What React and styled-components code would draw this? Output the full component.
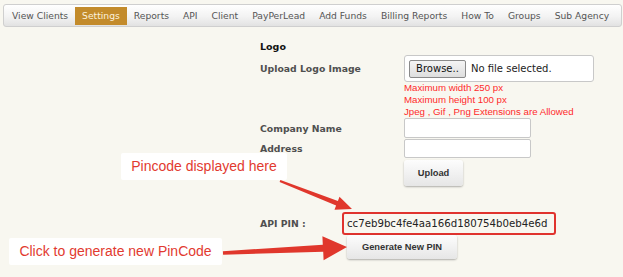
import React from 'react';
import styled, { createGlobalStyle } from 'styled-components';

const GlobalStyle = createGlobalStyle`
  html, body {
    margin: 0;
    padding: 0;
    background: #f8f7f0;
  }
  body {
    font-family: 'DejaVu Sans', Verdana, sans-serif;
  }
`;

const Page = styled.div`
  position: relative;
  width: 623px;
  height: 277px;
  padding: 4px 0 0 3px;
  box-sizing: border-box;
  overflow: hidden;
`;

const Nav = styled.ul`
  display: flex;
  align-items: center;
  list-style: none;
  margin: 0;
  padding: 0 0 0 1px;
  height: 23px;
  width: 619px;
  box-sizing: border-box;
  border: 1px solid #cfcfcf;
  border-radius: 3px;
  background: linear-gradient(#ffffff, #f3f3f3 55%, #e2e2e2);
`;

const NavItem = styled.li`
  height: 18px;
  line-height: 18px;
  padding: 0 7px;
  font-size: 9.2px;
  color: ${(p) => (p.active ? '#fbf1dc' : '#555')};
  background: ${(p) => (p.active ? '#c38b2b' : 'transparent')};
  white-space: nowrap;
`;

const Form = styled.div`
  display: flex;
  flex-direction: column;
  margin: 13px 0 0 257px;
`;

const Heading = styled.div`
  font-size: 9.5px;
  font-weight: bold;
  color: #111;
  line-height: 14px;
`;

const Row = styled.div`
  display: flex;
  align-items: center;
  margin-top: ${(p) => p.top || 0}px;
`;

const Label = styled.div`
  width: ${(p) => p.w || 144}px;
  flex: none;
  font-size: 9.3px;
  font-weight: bold;
  color: #4f4f4f;
`;

const FileBox = styled.div`
  display: flex;
  align-items: center;
  width: 190px;
  height: 27px;
  box-sizing: border-box;
  padding-left: 4px;
  background: #fff;
  border: 1px solid #c8c8c8;
  border-radius: 3px;
`;

const Browse = styled.div`
  height: 18px;
  width: 57px;
  box-sizing: border-box;
  border: 1px solid #8a8a8a;
  border-radius: 2px;
  background: linear-gradient(#f4f4f4, #dedede);
  font-size: 10px;
  line-height: 16px;
  text-align: center;
  color: #111;
`;

const FileText = styled.span`
  margin-left: 5px;
  font-size: 10px;
  color: #222;
`;

const Hints = styled.div`
  margin-left: 144px;
  font-family: 'Liberation Sans', Arial, sans-serif;
  font-size: 9.7px;
  line-height: 12px;
  color: #ff2a2a;
`;

const TextInput = styled.div`
  width: 127px;
  height: ${(p) => p.h || 20}px;
  box-sizing: border-box;
  background: #fff;
  border: 1px solid #c8c8c8;
  border-radius: 2px;
`;

const Button = styled.div`
  margin: ${(p) => p.m || '0'};
  width: ${(p) => p.w}px;
  height: ${(p) => p.h}px;
  box-sizing: border-box;
  display: flex;
  align-items: center;
  justify-content: center;
  border-radius: 3px;
  background: linear-gradient(#fdfdfd, #e6e6e6);
  box-shadow: 0 1px 2px rgba(0, 0, 0, 0.3);
  font-family: 'Liberation Sans', Arial, sans-serif;
  font-size: 9.3px;
  font-weight: bold;
  color: #333;
`;

const PinBox = styled.div`
  width: 214px;
  height: 23px;
  box-sizing: border-box;
  border: 2px solid #e0332e;
  border-radius: 3px;
  padding-left: 3px;
  font-size: 10.2px;
  line-height: 19px;
  color: #222;
  white-space: nowrap;
`;

const Note = styled.div`
  position: absolute;
  left: ${(p) => p.x}px;
  top: ${(p) => p.y}px;
  width: ${(p) => p.w}px;
  height: 27px;
  box-sizing: border-box;
  background: #fff;
  border-radius: 2px;
  font-family: 'Liberation Sans', Arial, sans-serif;
  font-size: 14px;
  line-height: 27px;
  text-align: center;
  color: #e23a2f;
`;

const Arrows = styled.svg`
  position: absolute;
  left: 0;
  top: 0;
  pointer-events: none;
`;

const tabs = [
  'View Clients',
  'Settings',
  'Reports',
  'API',
  'Client',
  'PayPerLead',
  'Add Funds',
  'Billing Reports',
  'How To',
  'Groups',
  'Sub Agency',
];

const App = () => (
  <Page>
    <GlobalStyle />
    <Nav>
      {tabs.map((t) => (
        <NavItem key={t} active={t === 'Settings'}>
          {t}
        </NavItem>
      ))}
    </Nav>

    <Form>
      <Heading>Logo</Heading>
      <Row top={1}>
        <Label>Upload Logo Image</Label>
        <FileBox>
          <Browse>Browse..</Browse>
          <FileText>No file selected.</FileText>
        </FileBox>
      </Row>
      <Hints>
        <div>Maximum width 250 px</div>
        <div>Maximum height 100 px</div>
        <div>Jpeg , Gif , Png Extensions are Allowed</div>
      </Hints>
      <Row>
        <Label>Company Name</Label>
        <TextInput />
      </Row>
      <Row top={1}>
        <Label>Address</Label>
        <TextInput h={19} />
      </Row>
      <Button w={59} h={26} m="2px 0 0 144px">
        Upload
      </Button>
      <Row top={26}>
        <Label w={82}>API PIN :</Label>
        <PinBox>cc7eb9bc4fe4aa166d180754b0eb4e6d</PinBox>
      </Row>
      <Button w={110} h={24} m="0 0 0 87px">
        Generate New PIN
      </Button>
    </Form>

    <Note x={121} y={153} w={166}>
      Pincode displayed here
    </Note>
    <Note x={9} y={238} w={213}>
      Click to generate new PinCode
    </Note>

    <Arrows width="623" height="277" viewBox="0 0 623 277">
      <polygon
        fill="#e0372c"
        points="279.6,182.1 280.4,179.9 337.9,200.9 339.5,196.7 352,209 334.5,209.7 336.1,205.5"
      />
      <polygon
        fill="#e0372c"
        points="223.1,254.8 222.9,251.2 322.8,244.7 322.4,236.2 347,247 323.6,260.2 323.2,251.7"
      />
    </Arrows>
  </Page>
);

export default App;
